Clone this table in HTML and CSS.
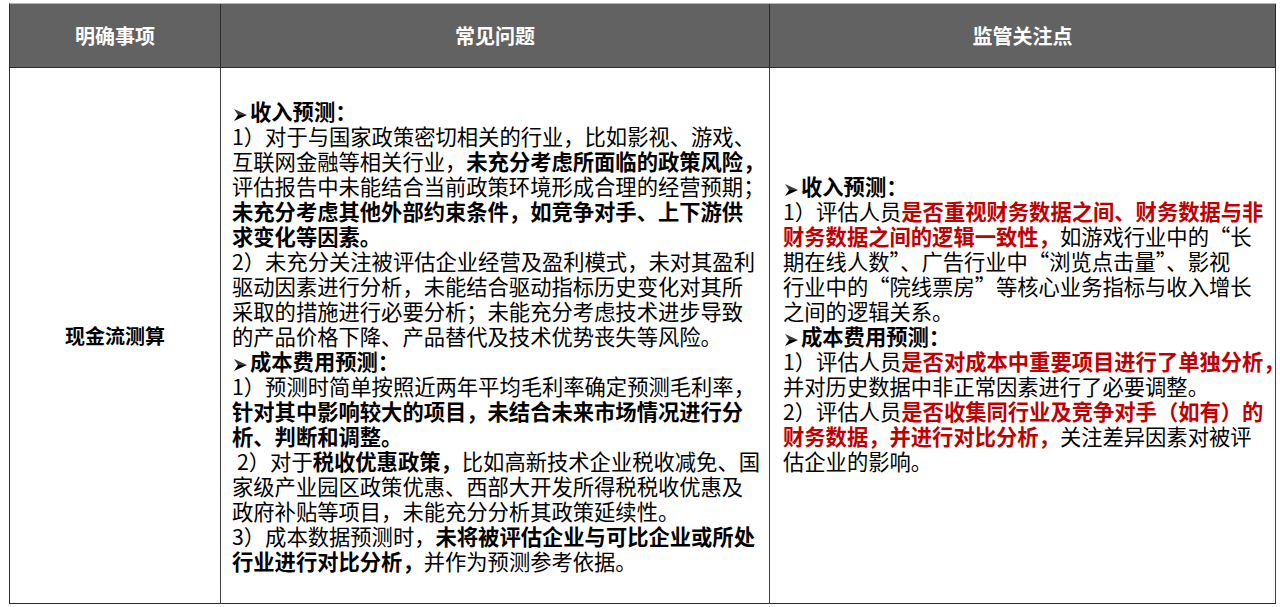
FILE: index.html
```html
<!DOCTYPE html>
<html lang="zh-CN">
<head>
<meta charset="utf-8">
<title>现金流测算</title>
<link rel="stylesheet" href="styles.css">
</head>
<body>
<div class="sheet">
  <div class="head">明确事项</div>
  <div class="head">常见问题</div>
  <div class="head">监管关注点</div>

  <div class="cell item">现金流测算</div>

  <div class="cell text col2">
    <p><svg class="arrow" viewBox="0 0 13 12" width="13" height="12"><polygon points="0,0 13,6 4,6" fill="#3a3a3a"/><polygon points="0,12 13,6 4,6" fill="#000"/></svg><b>收入预测：</b><br>
    1）对于与国家政策密切相关的行业，比如影视、游戏、<br>
    互联网金融等相关行业，<b>未充分考虑所面临的政策风险，</b><br>
    评估报告中未能结合当前政策环境形成合理的经营预期；<br>
    <b>未充分考虑其他外部约束条件，如竞争对手、上下游供</b><br>
    <b>求变化等因素。</b><br>
    2）未充分关注被评估企业经营及盈利模式，未对其盈利<br>
    驱动因素进行分析，未能结合驱动指标历史变化对其所<br>
    采取的措施进行必要分析；未能充分考虑技术进步导致<br>
    的产品价格下降、产品替代及技术优势丧失等风险。<br>
    <svg class="arrow" viewBox="0 0 13 12" width="13" height="12"><polygon points="0,0 13,6 4,6" fill="#3a3a3a"/><polygon points="0,12 13,6 4,6" fill="#000"/></svg><b>成本费用预测：</b><br>
    1）预测时简单按照近两年平均毛利率确定预测毛利率，<br>
    <b>针对其中影响较大的项目，未结合未来市场情况进行分</b><br>
    <b>析、判断和调整。</b><br>
    <span class="indent">2）对于<b>税收优惠政策，</b>比如高新技术企业税收减免、国</span><br>
    家级产业园区政策优惠、西部大开发所得税税收优惠及<br>
    政府补贴等项目，未能充分分析其政策延续性。<br>
    3）成本数据预测时，<b>未将被评估企业与可比企业或所处</b><br>
    <b>行业进行对比分析，</b>并作为预测参考依据。</p>
  </div>

  <div class="cell text col3">
    <p><svg class="arrow" viewBox="0 0 13 12" width="13" height="12"><polygon points="0,0 13,6 4,6" fill="#3a3a3a"/><polygon points="0,12 13,6 4,6" fill="#000"/></svg><b>收入预测：</b><br>
    1）评估人员<b class="red">是否重视财务数据之间、财务数据与非</b><br>
    <b class="red">财务数据之间的逻辑一致性，</b>如游戏行业中的“长<br>
    期在线人数”、广告行业中“浏览点击量”、影视<br>
    行业中的“院线票房”等核心业务指标与收入增长<br>
    之间的逻辑关系。<br>
    <svg class="arrow" viewBox="0 0 13 12" width="13" height="12"><polygon points="0,0 13,6 4,6" fill="#3a3a3a"/><polygon points="0,12 13,6 4,6" fill="#000"/></svg><b>成本费用预测：</b><br>
    1）评估人员<b class="red">是否对成本中重要项目进行了单独分析，</b><br>
    并对历史数据中非正常因素进行了必要调整。<br>
    2）评估人员<b class="red">是否收集同行业及竞争对手（如有）的</b><br>
    <b class="red">财务数据，并进行对比分析，</b>关注差异因素对被评<br>
    估企业的影响。<br>
    &nbsp;</p>
  </div>
</div>
</body>
</html>
```

FILE: styles.css
```css
html, body {
  margin: 0;
  padding: 0;
  background: #ffffff;
}

body {
  font-family: "Noto Sans CJK SC", "Noto Sans", sans-serif;
  color: #000;
}

.sheet {
  margin: 3px 0 0 9px;
  width: 1267px;
  display: grid;
  grid-template-columns: 211px 549px 506px;
  grid-template-rows: 64px 536px;
  border-left: 1px solid #2b2b2b;
  border-top: 1px solid #b8b8b8;
  box-sizing: border-box;
}

.head {
  background: #626262;
  color: #ffffff;
  font-weight: 700;
  font-size: 20px;
  display: flex;
  align-items: center;
  justify-content: center;
  border-right: 1px solid #2b2b2b;
  border-bottom: 1px solid #2b2b2b;
  box-sizing: border-box;
}

.cell {
  border-right: 1px solid #404040;
  border-bottom: 1px solid #2b2b2b;
  box-sizing: border-box;
  display: flex;
  align-items: center;
}

.item {
  justify-content: center;
  font-weight: 700;
  font-size: 20px;
}

.text p {
  margin: 0;
  font-size: 21.3px;
  line-height: 25px;
  white-space: nowrap;
}

.col2 {
  padding-left: 11px;
}

.col3 {
  padding-left: 13px;
}

.arrow {
  display: inline-block;
  margin: 0 3px 0 2px;
  vertical-align: -1px;
}

.indent {
  padding-left: 5px;
}

b {
  font-weight: 700;
}

.red {
  color: #c00000;
}
```
